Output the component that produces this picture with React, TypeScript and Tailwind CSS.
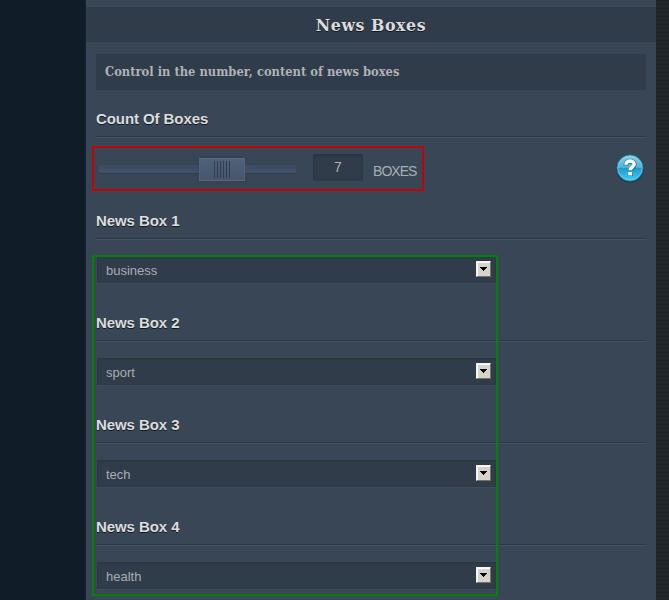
const boxes = ['business', 'sport', 'tech', 'health'];

function SectionTitle({ children }: { children: string }) {
  return (
    <h2 className="mx-[10px] h-[31px] text-[15px] font-bold leading-[28px] tracking-[-0.08px] text-[#dcdddd] shadow-[0_1px_0_#2e3946,0_2px_0_#435162] [text-shadow:0_1px_0_#111820]">
      {children}
    </h2>
  );
}

function Arrow() {
  return (
    <span className="mb-px flex h-4 w-[15px] items-center justify-center border border-b-[#77736b] border-l-[#f5f3ef] border-r-[#77736b] border-t-[#f5f3ef] bg-[#d6d3cc] shadow-[inset_1px_1px_0_#fff]">
      <svg width="7" height="4" viewBox="0 0 7 4" shapeRendering="crispEdges">
        <path d="M0 0h7v1H6v1H5v1H4v1H3V3H2V2H1V1H0z" fill="#000" />
      </svg>
    </span>
  );
}

function HelpIcon() {
  return (
    <svg width="30" height="30" viewBox="0 0 30 30">
      <defs>
        <linearGradient id="help" x1="0" y1="0" x2="0" y2="1">
          <stop offset="0" stopColor="#8fd3e9" />
          <stop offset="0.48" stopColor="#50b0d3" />
          <stop offset="0.52" stopColor="#209bcb" />
          <stop offset="1" stopColor="#3fd0f6" />
        </linearGradient>
      </defs>
      <circle cx="15" cy="15.8" r="14" fill="#253442" opacity="0.6" />
      <circle cx="15" cy="15" r="13" fill="url(#help)" stroke="#1b82ad" />
      <circle cx="15" cy="15" r="12.1" fill="none" stroke="#8bdcf1" strokeWidth="0.7" opacity="0.8" />
      <path d="M10.9 12.2c0-5.4 8.4-5 8.4-.6 0 3-3.9 3-3.9 6M15.4 19.3v3.8" fill="none" stroke="#176386" strokeWidth="4.8" />
      <path d="M10.9 11.7c.1-4.9 8.3-4.6 8.3-.5 0 2.9-4 2.8-4 6" fill="none" stroke="#fff" strokeWidth="3.5" />
      <rect x="13.2" y="18.9" width="4" height="3.6" rx="0.4" fill="#fff" />
    </svg>
  );
}

export default function App() {
  return (
    <div className="relative flex h-[600px] w-[669px] overflow-hidden bg-[#111c29] font-['Liberation_Sans',Arial,sans-serif]">
      <aside className="w-[86px] shrink-0 border-r border-[#142131] bg-[#111c29]" />
      <main className="w-[570px] shrink-0 bg-[#394656] pt-[7px]">
        <h1 className="h-[35px] bg-[#303c49] text-center font-['DejaVu_Serif_Condensed','DejaVu_Serif',serif] text-[17.5px] font-bold leading-[36px] tracking-[0.6px] text-[#dcdddd] [font-stretch:condensed] [text-shadow:0_1px_0_#101820]">
          News Boxes
        </h1>
        <p className="mx-[10px] mt-3 h-9 bg-[#303c49] pl-[9px] font-['DejaVu_Serif_Condensed','DejaVu_Serif',serif] text-[12.8px] font-bold leading-[36px] text-[#adb3b9] [font-stretch:condensed]">
          Control in the number, content of news boxes
        </p>
        <section className="pt-[15px]">
          <div className="pb-px">
            <SectionTitle>Count Of Boxes</SectionTitle>
          </div>
          <div className="mt-[9px] flex h-[45px] items-start justify-between">
            <div className="ml-[6px] flex h-[45px] w-[332px] items-start border-2 border-[#c40000] pl-[3px]">
              <div className="mt-[9px] flex h-6 w-[200px] items-center">
                <span className="h-[10px] w-[102px] rounded-l-[4px] border-y border-l border-b-[#303d4c] border-l-[#324050] border-t-[#364456] bg-gradient-to-b from-[#3d4b5e] to-[#435268]" />
                <span className="flex h-[23px] w-[46px] justify-center gap-[2px] border border-b-[#586981] border-l-[#52627a] border-r-[#52627a] border-t-[#586981] bg-gradient-to-b from-[#506078] to-[#46566c] pt-[2px] shadow-[0_0_3px_#303d4c]">
                  {[0, 1, 2, 3, 4, 5].map((n) => (
                    <i key={n} className="h-[17px] w-px bg-[#303e50]" />
                  ))}
                </span>
                <span className="h-[10px] w-[51px] rounded-r-[2px] border-y border-b-[#303d4c] border-t-[#364456] bg-gradient-to-b from-[#3d4b5e] to-[#435268]" />
              </div>
              <span className="ml-4 mt-[6px] h-[27px] w-[50px] rounded-[3px] bg-[#303c49] text-center text-sm leading-[27px] text-[#adb3b9] shadow-[inset_0_1px_3px_#26323d]">
                7
              </span>
              <span className="ml-[10px] mt-[14px] text-sm leading-[18px] tracking-[-0.95px] text-[#a7aeb7]">BOXES</span>
            </div>
            <div className="mr-[11px] mt-[7px]">
              <HelpIcon />
            </div>
          </div>
        </section>
        <div className="pt-4">
          {boxes.map((name, i) => (
            <section key={name} className="h-[102px]">
              <SectionTitle>{`News Box ${i + 1}`}</SectionTitle>
              <div className="ml-[11px] mt-[18px] flex h-[27px] w-[399px] items-center justify-between bg-[#303c49] pb-px pl-[9px] pr-[5px] text-[13px] text-[#a7aeb6] shadow-[inset_0_1px_2px_#293540,0_1px_0_#3e4c5e]">
                <span className="pt-[3px]">{name}</span>
                <Arrow />
              </div>
            </section>
          ))}
        </div>
      </main>
      <aside className="w-[13px] shrink-0 bg-[#22272b] bg-[repeating-linear-gradient(0deg,transparent_0px,transparent_3px,#1d2226_3px,#1d2226_4px)]" />
      <div className="pointer-events-none absolute left-[92px] top-[255px] h-[341px] w-[406px] border-2 border-[#008200]" />
    </div>
  );
}
